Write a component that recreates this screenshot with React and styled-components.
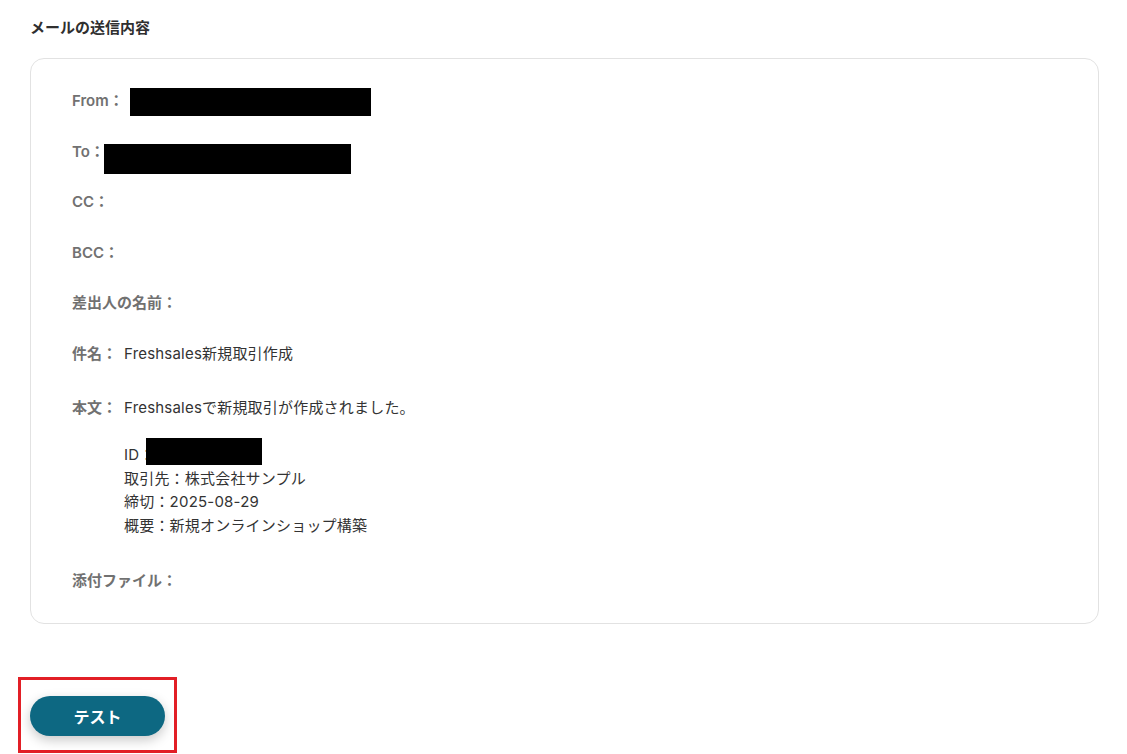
import React from "react";
import styled, { createGlobalStyle } from "styled-components";

const Global = createGlobalStyle`
  html, body {
    margin: 0;
    padding: 0;
    background: #fff;
  }
  body {
    font-family: Inter, "Noto Sans CJK JP", sans-serif;
    color: #333;
  }
`;

const Page = styled.div`
  padding: 17px 28px 0 30px;
`;

const Title = styled.h2`
  margin: 0 0 19px;
  font-size: 15px;
  line-height: 22px;
  font-weight: 700;
  color: #2f2f2f;
`;

const Card = styled.div`
  border: 1px solid #e2e2e2;
  border-radius: 14px;
  padding: 30px 41px 30px;
  display: flex;
  flex-direction: column;
  gap: 26.5px;
`;

const Row = styled.div`
  display: flex;
  align-items: flex-start;
  font-size: 15px;
  line-height: 24px;
  height: ${(p) => (p.$body ? "auto" : "24px")};
  padding: ${(p) => (p.$body ? "4px 0 5px" : "0")};
`;

const Label = styled.span`
  color: #717171;
  font-weight: 600;
  white-space: nowrap;
  line-height: 24px;
`;

const Value = styled.div`
  margin-left: 7px;
  color: #333;
  font-weight: 400;
  font-size: 15px;
  letter-spacing: 0.2px;
`;

const Line = styled.div`
  height: 23.5px;
  line-height: 23.5px;
  white-space: nowrap;
`;

const Redact = styled.span`
  display: inline-block;
  position: relative;
  vertical-align: top;
  background: #000;
  width: ${(p) => p.$w}px;
  height: ${(p) => p.$h}px;
  top: ${(p) => p.$top}px;
  margin-left: ${(p) => p.$ml}px;
`;

const Highlight = styled.div`
  box-sizing: border-box;
  margin: 53px 0 0 -12px;
  width: 159px;
  border: 3px solid #e21f26;
  padding: 16px 0 14px 9px;
`;

const Button = styled.button`
  width: 135px;
  height: 40px;
  border: none;
  border-radius: 20px;
  background: #0d6882;
  color: #fff;
  font-family: "Noto Sans CJK JP", sans-serif;
  font-size: 16px;
  font-weight: 700;
  box-shadow: 0 4px 12px rgba(0, 0, 0, 0.22);
  cursor: pointer;
`;

export default function App() {
  return (
    <>
      <Global />
      <Page>
        <Title>メールの送信内容</Title>
        <Card>
          <Row>
            <Label>From：</Label>
            <Redact $w={241} $h={28} $top={-1} $ml={6} />
          </Row>
          <Row>
            <Label>To：</Label>
            <Redact $w={247} $h={30} $top={4} $ml={-1} />
          </Row>
          <Row>
            <Label>CC：</Label>
          </Row>
          <Row>
            <Label>BCC：</Label>
          </Row>
          <Row>
            <Label>差出人の名前：</Label>
          </Row>
          <Row>
            <Label>件名：</Label>
            <Value>
              <Line>Freshsales新規取引作成</Line>
            </Value>
          </Row>
          <Row $body>
            <Label>本文：</Label>
            <Value>
              <Line>Freshsalesで新規取引が作成されました。</Line>
              <Line />
              <Line>
                ID：<Redact $w={116} $h={27} $top={-5} $ml={-8} />
              </Line>
              <Line>取引先：株式会社サンプル</Line>
              <Line>締切：2025-08-29</Line>
              <Line>概要：新規オンラインショップ構築</Line>
            </Value>
          </Row>
          <Row>
            <Label>添付ファイル：</Label>
          </Row>
        </Card>
        <Highlight>
          <Button>テスト</Button>
        </Highlight>
      </Page>
    </>
  );
}
